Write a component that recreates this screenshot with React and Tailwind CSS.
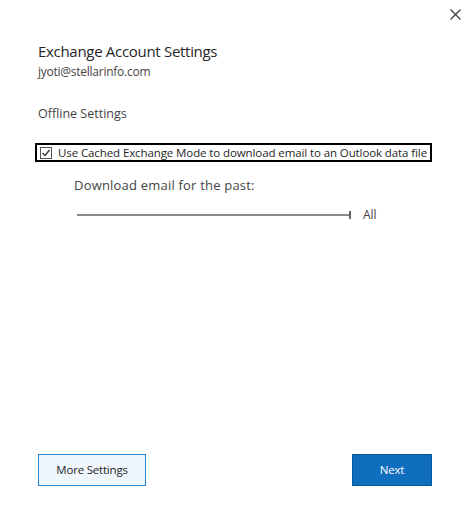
import { useState } from "react";

const App = () => {
  const [cached, setCached] = useState(true);

  return (
    <div
      className="relative w-[470px] h-[522px] bg-white flex flex-col text-[#262626]"
      style={{ fontFamily: '"Segoe UI", "Open Sans", sans-serif' }}
    >
      <div className="flex justify-end pt-[7px] pr-[8px]">
        <button className="w-[14px] h-[14px] flex items-center justify-center text-[#333]">
          <svg width="11" height="11" viewBox="0 0 11 11">
            <path d="M0.5 0.5 L10.5 10.5 M10.5 0.5 L0.5 10.5" stroke="#333" strokeWidth="1.1" />
          </svg>
        </button>
      </div>

      <div className="px-[38px] pt-[20px]">
        <h1 className="text-[15px] leading-[20px] tracking-[-0.3px] text-[#262626]">
          Exchange Account Settings
        </h1>
        <div className="mt-[3px] text-[12px] leading-[16px] tracking-[-0.25px] text-[#444]">
          jyoti@stellarinfo.com
        </div>
        <div className="mt-[26px] text-[12.5px] leading-[16px] text-[#444]">Offline Settings</div>
      </div>

      <div className="pl-[35px] pr-[38px] mt-[21px]">
        <label className="flex items-center gap-[6px] h-[19px] border-2 border-black pl-[3px] pr-[2px] cursor-pointer">
          <span
            onClick={() => setCached(!cached)}
            className="w-[12px] h-[12px] border border-[#555] flex items-center justify-center bg-white"
          >
            {cached && (
              <svg width="10" height="10" viewBox="0 0 10 10">
                <path d="M1.5 5 L4 7.5 L8.5 2" fill="none" stroke="#333" strokeWidth="1.3" />
              </svg>
            )}
          </span>
          <span className="text-[11.5px] leading-[16px] tracking-[-0.1px] whitespace-nowrap text-[#262626]">
            Use Cached Exchange Mode to download email to an Outlook data file
          </span>
        </label>
      </div>

      <div className="pl-[74px] mt-[15px] text-[13px] leading-[17px] tracking-[0.2px] text-[#444]">
        Download email for the past:
      </div>

      <div className="pl-[77px] mt-[13px] flex items-center">
        <div className="w-[272px] h-[2px] bg-[#8a8a8a]" />
        <div className="w-[2px] h-[8px] bg-[#666]" />
        <span className="ml-[12px] text-[12px] leading-[16px] text-[#444]">All</span>
      </div>

      <div className="flex-1" />

      <div className="px-[38px] pb-[36px] flex justify-between">
        <button className="w-[108px] h-[32px] bg-[#eff6fc] border border-[#2b88d8] text-[11.5px] tracking-[-0.2px] text-[#262626]">
          More Settings
        </button>
        <button className="w-[80px] h-[32px] bg-[#106ebe] border border-[#005a9e] text-[11.5px] tracking-[-0.2px] text-white">
          Next
        </button>
      </div>
    </div>
  );
};

export default App;
